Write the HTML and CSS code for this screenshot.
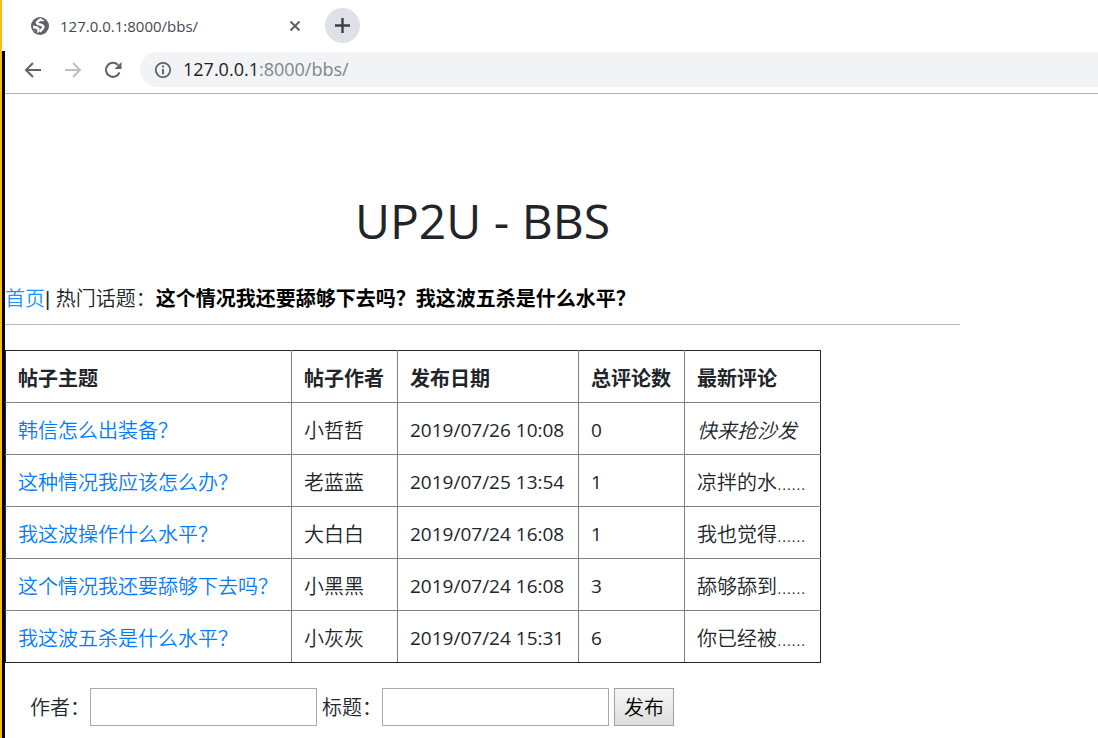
FILE: index.html
```html
<!DOCTYPE html>
<html lang="zh-CN">
<head>
<meta charset="utf-8">
<title>UP2U - BBS</title>
<link rel="stylesheet" href="styles.css">
</head>
<body>
<header class="tabs">
  <svg class="globe" width="18" height="18" viewBox="0 0 18 18" aria-hidden="true"><circle cx="9" cy="9" r="9" fill="#5f6368"/><path d="M10.6 2.2C8.8 3 5.6 4.4 6 6C6.5 7.8 11.2 7.2 12.2 9.3C13 11.2 10.6 12.6 8.6 14.6" fill="none" stroke="#fff" stroke-width="2.6"/><path d="M2 8.6L6.6 9.6L8.8 11.4L7.4 16C4.2 15.2 1.8 12.4 2 8.6Z" fill="#fff"/><path d="M2.6 11.2C4 11.4 5.4 11.8 6.4 12.8L6.2 15.6C4.4 14.6 3.2 13.2 2.6 11.2Z" fill="#5f6368"/><path d="M10.6 2L13.6 3.4L11.4 4.6L9.4 3.4Z" fill="#fff"/></svg>
  <span class="tab-title">127.0.0.1:8000/bbs/</span>
  <button class="icon-button tab-close" aria-label="关闭"><svg width="12" height="12" viewBox="0 0 12 12"><path d="M1.5 1.5L10.5 10.5M10.5 1.5L1.5 10.5" stroke="#5f6368" stroke-width="2"/></svg></button>
  <button class="icon-button new-tab" aria-label="新标签页"><svg width="15" height="15" viewBox="0 0 15 15"><path d="M7.5 0V15M0 7.5H15" stroke="#3c4043" stroke-width="2.4"/></svg></button>
</header>
<div class="window">
  <nav class="toolbar">
    <button class="icon-button" aria-label="后退"><svg width="18" height="16" viewBox="0 0 18 16"><path d="M17 8H2M9 1L2 8L9 15" fill="none" stroke="#5f6368" stroke-width="2"/></svg></button>
    <button class="icon-button" aria-label="前进"><svg width="18" height="16" viewBox="0 0 18 16"><path d="M1 8H16M9 1L16 8L9 15" fill="none" stroke="#bdbfc1" stroke-width="2"/></svg></button>
    <button class="icon-button" aria-label="刷新"><svg width="18" height="18" viewBox="0 0 18 18"><path d="M15.5 11.3A7 7 0 1 1 14 4" fill="none" stroke="#5f6368" stroke-width="2"/><path d="M17.5 1V8H10.5Z" fill="#5f6368"/></svg></button>
    <div class="address">
      <svg width="18" height="18" viewBox="0 0 18 18" aria-hidden="true"><circle cx="9" cy="9" r="7.2" fill="none" stroke="#5f6368" stroke-width="1.8"/><path d="M9 4.6V6.4M9 8V13.2" stroke="#5f6368" stroke-width="1.9"/></svg>
      <span class="url"><span class="host">127.0.0.1</span>:8000/bbs/</span>
    </div>
  </nav>
  <main class="page">
    <h1>UP2U - BBS</h1>
    <p class="topics"><a class="home" href="#">首页</a>| 热门话题：<a class="hot" href="#">这个情况我还要舔够下去吗？</a><a class="hot" href="#">我这波五杀是什么水平？</a></p>
    <hr>
    <table>
      <colgroup><col class="c-topic"><col class="c-author"><col class="c-date"><col class="c-count"><col class="c-last"></colgroup>
      <thead>
        <tr><th>帖子主题</th><th>帖子作者</th><th>发布日期</th><th>总评论数</th><th>最新评论</th></tr>
      </thead>
      <tbody>
        <tr><td><a href="#">韩信怎么出装备？</a></td><td>小哲哲</td><td class="num">2019/07/26 10:08</td><td class="num">0</td><td><em>快来抢沙发</em></td></tr>
        <tr><td><a href="#">这种情况我应该怎么办？</a></td><td>老蓝蓝</td><td class="num">2019/07/25 13:54</td><td class="num">1</td><td>凉拌的水......</td></tr>
        <tr><td><a href="#">我这波操作什么水平？</a></td><td>大白白</td><td class="num">2019/07/24 16:08</td><td class="num">1</td><td>我也觉得......</td></tr>
        <tr><td><a href="#">这个情况我还要舔够下去吗？</a></td><td>小黑黑</td><td class="num">2019/07/24 16:08</td><td class="num">3</td><td>舔够舔到......</td></tr>
        <tr><td><a href="#">我这波五杀是什么水平？</a></td><td>小灰灰</td><td class="num">2019/07/24 15:31</td><td class="num">6</td><td>你已经被......</td></tr>
      </tbody>
    </table>
    <form class="post">
      <label for="author">作者：</label><input id="author" type="text">
      <label for="subject">标题：</label><input id="subject" type="text">
      <button type="button">发布</button>
    </form>
  </main>
</div>
</body>
</html>
```
FILE: styles.css
```css
* { box-sizing: border-box; }

body {
  margin: 0;
  min-height: 100vh;
  display: flex;
  flex-direction: column;
  border-left: 2px solid #ffba12;
  background: #fff;
  color: #212529;
  font: 350 20px/30px "Open Sans", "Noto Sans CJK SC", sans-serif;
}

.icon-button {
  display: flex;
  align-items: center;
  justify-content: center;
  padding: 0;
  border: 0;
  background: none;
}

.tabs {
  display: flex;
  align-items: center;
  height: 51px;
  padding-left: 29px;
}

.tab-title {
  width: 229px;
  margin-left: 11px;
  color: #45494d;
  font-size: 15px;
  font-weight: 400;
}

.tab-close { width: 12px; height: 12px; }

.new-tab {
  width: 35px;
  height: 35px;
  margin-left: 24px;
  border-radius: 50%;
  background: #dee1e6;
}

.window {
  flex: 1;
  border-left: 3px solid #000;
}

.toolbar {
  display: flex;
  align-items: center;
  gap: 22px;
  height: 43px;
  padding: 1px 0 6px 19px;
  border-bottom: 1px solid #b3b3b3;
}

.address {
  flex: 1;
  display: flex;
  align-items: center;
  gap: 11px;
  height: 35px;
  margin-left: -4px;
  padding-left: 14px;
  border-radius: 18px 0 0 18px;
  background: #f1f3f4;
}

.url { color: #80868b; font-size: 18px; font-weight: 400; line-height: 28px; padding-bottom: 2px; }
.host { color: #202124; }

.page { max-width: 955px; }

h1 {
  margin: 0;
  padding-top: 97px;
  font-size: 48px;
  font-weight: 400;
  line-height: 60px;
  text-align: center;
}

.topics {
  margin: 33px 0 10px;
  font-family: "Liberation Sans", "Noto Sans CJK SC", sans-serif;
}

a { color: #007bff; text-decoration: none; }
.home { color: #1e90ff; }
.hot { color: #000; font-weight: 700; }

hr {
  margin: 0 0 25px;
  border: 0;
  border-top: 1px solid #b8b8b8;
}

table {
  table-layout: fixed;
  width: 816px;
  border: 1px solid #212529;
  border-collapse: collapse;
}

.c-topic { width: 286px; }
.c-author { width: 106px; }
.c-date { width: 181px; }
.c-count { width: 106px; }
.c-last { width: 136px; }

th, td {
  height: 52px;
  padding: 4px 0 0 12px;
  border: 1px solid #808080;
  text-align: left;
  white-space: nowrap;
}

th { border-top-color: #212529; font-weight: 700; }
th:first-child, td:first-child { border-left-color: #212529; }
th:last-child, td:last-child { border-right-color: #212529; }
tbody tr:last-child td { border-bottom-color: #212529; }
.num { padding-top: 2px; font-size: 19px; font-weight: 400; }

.post {
  display: flex;
  align-items: center;
  padding: 25px 0 0 25px;
}

.post label { line-height: 36px; padding-top: 2px; }

.post input {
  width: 227px;
  height: 38px;
  margin-right: 5px;
  padding: 2px 4px;
  border: 1px solid #a9a9a9;
  font: inherit;
}

.post button {
  width: 60px;
  height: 38px;
  padding: 2px 0 0;
  border: 1px solid #a0a0a0;
  background: linear-gradient(#f6f6f6, #dddddd);
  color: #000;
  font: inherit;
}
```
